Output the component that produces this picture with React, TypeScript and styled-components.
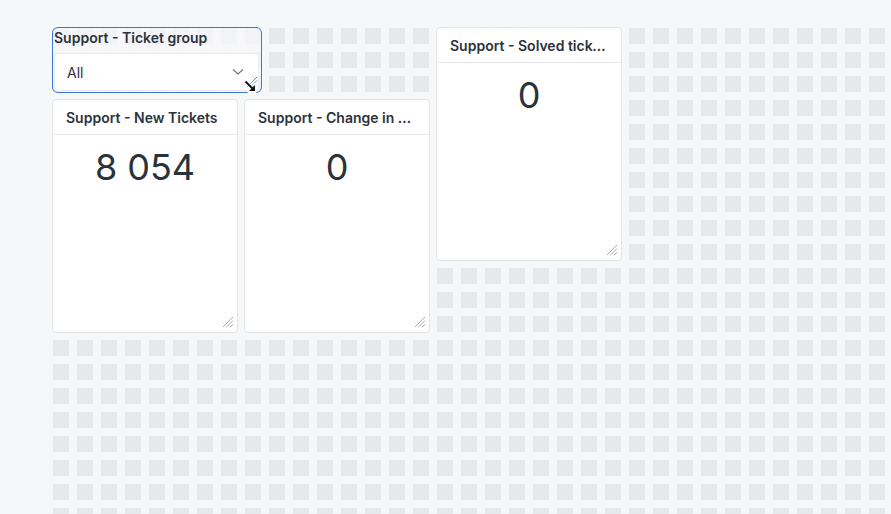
import React from "react"
import styled, { createGlobalStyle } from "styled-components"

const GlobalStyle = createGlobalStyle`
  html, body {
    margin: 0;
    padding: 0;
    background: #f6f7f9;
    font-family: Inter, "Noto Sans", "Liberation Sans", sans-serif;
    color: #2c333c;
    overflow: hidden;
  }
  * {
    box-sizing: border-box;
  }
`

const Page = styled.div`
  height: 514px;
  padding: 27px 0 0 52px;
`

const Board = styled.div`
  display: grid;
  grid-template-columns: repeat(36, 18px);
  grid-auto-rows: 18px;
  gap: 6px;
  height: 487px;
  background-color: #e7e8eb;
  background-image: linear-gradient(
      to right,
      #f6f7f9 0 1px,
      transparent 1px 17px,
      #f6f7f9 17px 24px
    ),
    linear-gradient(
      to bottom,
      #f6f7f9 0 1px,
      transparent 1px 17px,
      #f6f7f9 17px 24px
    );
  background-size: 24px 24px;
`

const Cell = styled.div<{ $col: number; $row: number; $w: number; $h: number }>`
  grid-column: ${(p) => p.$col} / span ${(p) => p.$w};
  grid-row: ${(p) => p.$row} / span ${(p) => p.$h};
  position: relative;
  min-width: 0;
`

const Filter = styled(Cell)`
  border: 1px solid #3a78d0;
  border-radius: 6px;
  background: rgba(246, 247, 249, 0.72);
  padding: 0 2px 0 1px;
  display: flex;
  flex-direction: column;
`

const FilterTitle = styled.div`
  font-size: 14px;
  font-weight: 600;
  line-height: 20px;
  height: 25px;
  color: #2c333c;
  white-space: nowrap;
`

const Select = styled.div`
  flex: 1;
  margin-bottom: 1px;
  background: #fff;
  border: 1px solid #eceef0;
  border-radius: 4px;
  display: flex;
  align-items: center;
  justify-content: space-between;
  padding: 0 14px 0 12px;
  font-size: 14px;
  color: #2c333c;
`

const Card = styled(Cell)`
  background: #fff;
  border: 1px solid #e2e4e7;
  border-radius: 4px;
  display: flex;
  flex-direction: column;
`

const CardHeader = styled.div`
  height: 35px;
  flex-shrink: 0;
  border-bottom: 1px solid #e6e8eb;
  padding: 0 13px;
  display: flex;
  align-items: center;
`

const CardTitle = styled.span`
  font-size: 14px;
  font-weight: 600;
  color: #2c333c;
  white-space: nowrap;
  overflow: hidden;
  text-overflow: ellipsis;
  min-width: 0;
`

const Value = styled.div`
  text-align: center;
  font-size: 36px;
  font-weight: 400;
  line-height: 44px;
  padding-top: 10px;
  color: #2a323b;
`

const Handle = styled.svg`
  position: absolute;
  right: 3px;
  bottom: 4px;
  width: 12px;
  height: 12px;
`

const Cursor = styled.svg`
  position: absolute;
  right: 4px;
  bottom: -1px;
  width: 14px;
  height: 14px;
`

const ResizeHandle = ({ color = "#a9adb3" }: { color?: string }) => (
  <Handle viewBox="0 0 12 12">
    <path d="M1 11 L11 1 M4.5 11 L11 4.5 M8 11 L11 8" stroke={color} strokeWidth="1" fill="none" />
  </Handle>
)

const Chevron = () => (
  <svg width="12" height="8" viewBox="0 0 12 8">
    <path d="M1 1.5 L6 6 L11 1.5" stroke="#6b7280" strokeWidth="1.1" fill="none" />
  </svg>
)

type Stat = {
  title: string
  value: string
  col: number
  row: number
}

const stats: Stat[] = [
  { title: "Support - New Tickets", value: "8 054", col: 1, row: 4 },
  { title: "Support - Change in number of tickets", value: "0", col: 9, row: 4 },
  { title: "Support - Solved tickets", value: "0", col: 17, row: 1 },
]

export default function App() {
  return (
    <>
      <GlobalStyle />
      <Page>
        <Board>
          <Filter $col={1} $row={1} $w={9} $h={3}>
            <FilterTitle>Support - Ticket group</FilterTitle>
            <Select>
              <span>All</span>
              <Chevron />
            </Select>
            <ResizeHandle color="#5a8fd8" />
            <Cursor viewBox="0 0 14 14">
              <path
                d="M2 2 L12 12 M12 12 L12 6 M12 12 L6 12"
                stroke="#fff"
                strokeWidth="4"
                fill="none"
                strokeLinecap="round"
              />
              <path d="M2.5 2.5 L10 10" stroke="#111" strokeWidth="2" />
              <path d="M12 12 L12 6 L6 12 Z" fill="#111" />
            </Cursor>
          </Filter>
          {stats.map((s) => (
            <Card key={s.title} $col={s.col} $row={s.row} $w={8} $h={10}>
              <CardHeader>
                <CardTitle>{s.title}</CardTitle>
              </CardHeader>
              <Value>{s.value}</Value>
              <ResizeHandle />
            </Card>
          ))}
        </Board>
      </Page>
    </>
  )
}
